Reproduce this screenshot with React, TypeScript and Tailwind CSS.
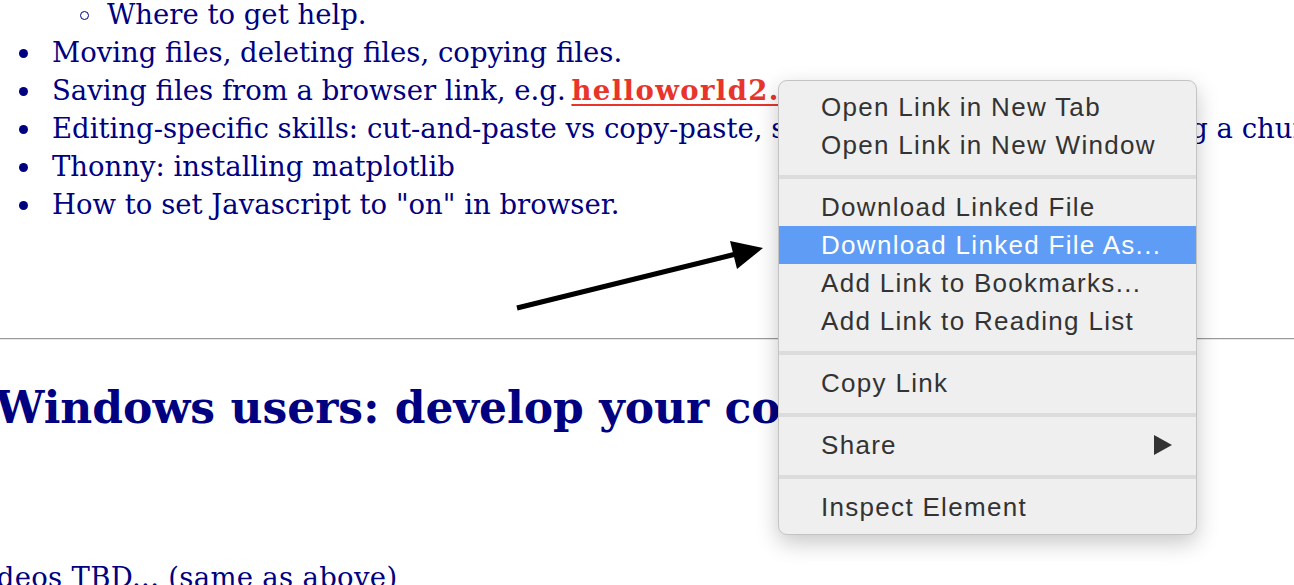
import React from "react";

type MenuEntry = { label: string; active?: boolean; submenu?: boolean } | "sep";

const menu: MenuEntry[] = [
  { label: "Open Link in New Tab" },
  { label: "Open Link in New Window" },
  "sep",
  { label: "Download Linked File" },
  { label: "Download Linked File As...", active: true },
  { label: "Add Link to Bookmarks..." },
  { label: "Add Link to Reading List" },
  "sep",
  { label: "Copy Link" },
  "sep",
  { label: "Share", submenu: true },
  "sep",
  { label: "Inspect Element" },
];

function Disc() {
  return <span className="ml-[19px] mr-[24px] inline-block h-[9px] w-[9px] shrink-0 rounded-full bg-[#000080]" />;
}

function Row({ children }: { children: React.ReactNode }) {
  return (
    <li className="flex h-[38px] items-center whitespace-nowrap">
      <Disc />
      <span>{children}</span>
    </li>
  );
}

export default function App() {
  return (
    <div className="relative h-[585px] w-[1294px] overflow-hidden bg-white">
      {/* страница за меню */}
      <div className="font-['DejaVu_Serif',serif] text-[27.5px] text-[#000080]">
        <ul className="-mt-[4px]">
          <li className="flex h-[38px] items-center whitespace-nowrap">
            <span className="ml-[80px] mr-[18px] inline-block h-[9px] w-[9px] shrink-0 rounded-full border-[1.5px] border-[#000080]" />
            <span>Where to get help.</span>
          </li>
          <Row>Moving files, deleting files, copying files.</Row>
          <Row>
            Saving files from a browser link, e.g.{" "}
            <a className="-ml-[3px] font-bold tracking-[1.4px] text-[#e8342a] underline decoration-2 underline-offset-4">
              helloworld2.py
            </a>
          </Row>
          <Row>Editing-specific skills: cut-and-paste vs copy-paste, selecting and then highlighting a chunk of text.</Row>
          <Row>Thonny: installing matplotlib</Row>
          <Row>How to set Javascript to "on" in browser.</Row>
        </ul>

        <div className="mt-[114px] h-[1px] bg-[#9a9a9a]" />
        <div className="h-[1px] bg-[#e8e8e8]" />

        <h1 className="-ml-[5px] mt-[40px] h-[56px] whitespace-nowrap text-[44px] font-bold leading-[56px]">
          Windows users: develop your computer skills
        </h1>

        <p className="-ml-[32px] mt-[122px] whitespace-nowrap tracking-[0.3px] leading-[38px]">Videos TBD... (same as above)</p>
      </div>

      {/* стрелка-аннотация */}
      <svg className="pointer-events-none absolute left-0 top-0" width="1294" height="585" viewBox="0 0 1294 585">
        <line x1="517" y1="308" x2="736" y2="254" stroke="#000" strokeWidth="5" />
        <polygon points="763,248 730,241 737,269" fill="#000" />
      </svg>

      {/* контекстное меню */}
      <div className="absolute left-[778px] top-[80px] w-[419px] rounded-[9px] border border-[#c4c4c4] bg-[#efefef] pb-[8px] pt-[7px] font-['Liberation_Sans',Arial,sans-serif] text-[26px] tracking-[1.3px] text-[#333] shadow-[0_8px_22px_rgba(0,0,0,0.22)]">
        {menu.map((m, i) =>
          m === "sep" ? (
            <div key={i} className="mb-[9px] mt-[11px] h-[4px] bg-[#dcdcdc]" />
          ) : (
            <div
              key={i}
              className={`flex h-[38px] items-center justify-between pl-[42px] pr-[24px] ${
                m.active ? "bg-[#5e9cf5] text-white" : ""
              }`}
            >
              <span>{m.label}</span>
              {m.submenu && (
                <svg width="18" height="20" viewBox="0 0 18 20">
                  <polygon points="0,0 18,10 0,20" fill="#333" />
                </svg>
              )}
            </div>
          )
        )}
      </div>
    </div>
  );
}
